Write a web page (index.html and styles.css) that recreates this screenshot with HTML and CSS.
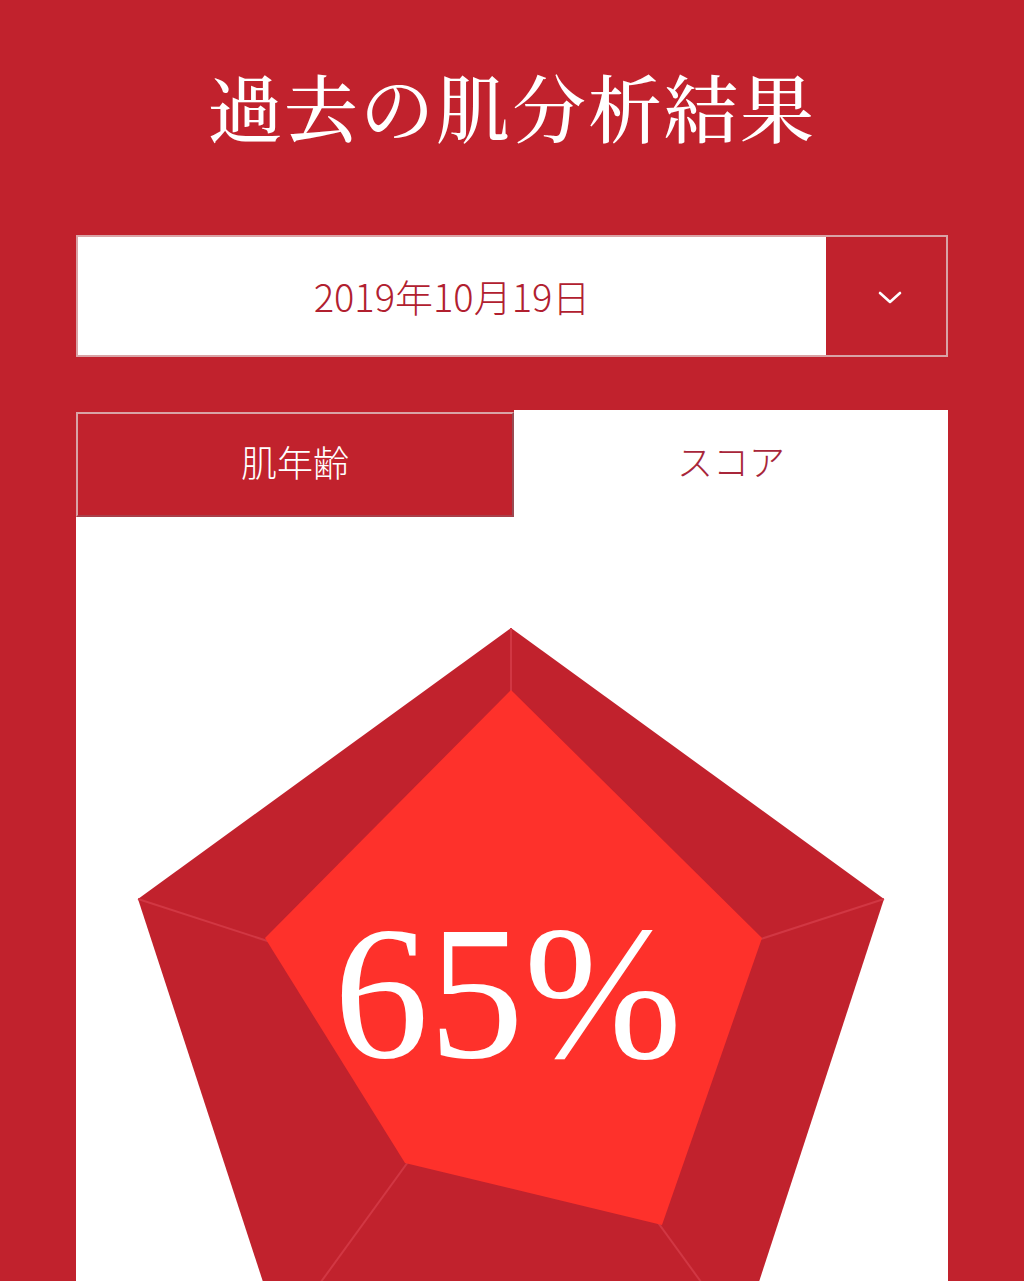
FILE: index.html
```html
<!DOCTYPE html>
<html lang="ja">
<head>
<meta charset="utf-8">
<title>過去の肌分析結果</title>
<link rel="stylesheet" href="styles.css">
</head>
<body>
<div class="page">
  <h1 class="title">過去の肌分析結果</h1>
  <div class="select">
    <div class="select-value">2019年10月19日</div>
    <div class="select-btn">
      <svg class="chev" width="26" height="15" viewBox="0 0 26 15"><polyline points="3,3 13,12 23,3" fill="none" stroke="#fff" stroke-width="2.6" stroke-linecap="round" stroke-linejoin="round"/></svg>
    </div>
  </div>
  <div class="tabs">
    <div class="tab tab-active">肌年齢</div>
    <div class="tab tab-off">スコア</div>
  </div>
  <div class="panel">
    <svg class="chart" width="872" height="820" viewBox="0 0 872 820">
      <polygon points="435,111 808,382 665,820 205,820 62,382" fill="#c1222d"/>
      <g stroke="#d13743" stroke-width="2">
        <line x1="435" y1="503" x2="435" y2="111"/>
        <line x1="435" y1="503" x2="808" y2="382"/>
        <line x1="435" y1="503" x2="665" y2="820"/>
        <line x1="435" y1="503" x2="205" y2="820"/>
        <line x1="435" y1="503" x2="62" y2="382"/>
      </g>
      <polygon points="435,173 686,421 586,708 329,646 189,421" fill="#fe312b"/>
      <text class="score" x="432" y="540" text-anchor="middle">65%</text>
    </svg>
  </div>
</div>
</body>
</html>
```
FILE: styles.css
```css
html, body {
  margin: 0;
  padding: 0;
  background: #c1222d;
}
.page {
  padding: 0 76px;
  height: 1281px;
  overflow: hidden;
}
.title {
  margin: 0;
  padding-top: 65px;
  height: 235px;
  box-sizing: border-box;
  text-align: center;
  color: #fff;
  font-family: "Noto Serif CJK JP", "Noto Sans CJK JP", serif;
  font-weight: 500;
  font-size: 74px;
  line-height: 80px;
  letter-spacing: 2px;
}
.select {
  display: flex;
  height: 122px;
  box-sizing: border-box;
  border: 2px solid #d9a3a6;
}
.select-value {
  flex: 1;
  background: #fff;
  display: flex;
  align-items: center;
  justify-content: center;
  color: #b1202f;
  font-family: "Noto Sans CJK JP", sans-serif;
  font-weight: 300;
  font-size: 38px;
  padding-bottom: 2px;
}
.select-btn {
  width: 120px;
  background: #c1222d;
  display: flex;
  align-items: center;
  justify-content: center;
  padding-left: 8px;
  padding-top: 2px;
  box-sizing: border-box;
}
.chev {
  display: block;
}
.tabs {
  margin-top: 55px;
  display: flex;
  height: 105px;
}
.tab {
  flex: 1 1 0;
  min-width: 0;
  display: flex;
  align-items: center;
  justify-content: center;
  font-family: "Noto Sans CJK JP", sans-serif;
  font-weight: 300;
  font-size: 36px;
  padding-bottom: 8px;
  box-sizing: border-box;
}
.tab-active {
  background: #c1222d;
  color: #fff;
  border-top: 2px solid #d9a3a6;
  border-left: 2px solid #d9a3a6;
  border-right: 2px solid #9a4a52;
  border-bottom: 2px solid #a9404a;
}
.tab-off {
  background: #fff;
  color: #a8263a;
  margin-top: -2px;
}
.panel {
  background: #fff;
  height: 900px;
}
.chart {
  display: block;
}
.score {
  fill: #fff;
  font-family: "Liberation Serif", serif;
  font-size: 190px;
}
```
